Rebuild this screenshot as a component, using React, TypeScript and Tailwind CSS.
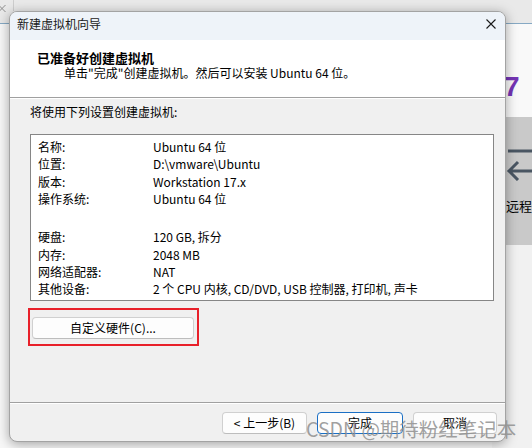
const rows: [string, string][] = [
  ["名称:", "Ubuntu 64 位"],
  ["位置:", "D:\\vmware\\Ubuntu"],
  ["版本:", "Workstation 17.x"],
  ["操作系统:", "Ubuntu 64 位"],
];

const rows2: [string, string][] = [
  ["硬盘:", "120 GB, 拆分"],
  ["内存:", "2048 MB"],
  ["网络适配器:", "NAT"],
  ["其他设备:", "2 个 CPU 内核, CD/DVD, USB 控制器, 打印机, 声卡"],
];

const Row = ({ label, value }: { label: string; value: string }) => (
  <div className="flex h-[17.3px] items-center whitespace-nowrap leading-[17px]">
    <span className="w-[115px] shrink-0">{label}</span>
    <span>{value}</span>
  </div>
);

const WinButton = ({
  children,
  primary,
  className = "",
}: {
  children: React.ReactNode;
  primary?: boolean;
  className?: string;
}) => (
  <button
    type="button"
    className={`flex h-[22px] items-center justify-center rounded-[4px] border bg-[#fdfdfd] text-[12px] leading-none text-black ${
      primary ? "border-[#1a6fc4]" : "border-[#d0d0d0] border-b-[#bdbdbd]"
    } ${className}`}
  >
    {children}
  </button>
);

const App = () => {
  return (
    <div className="relative h-[448px] w-[532px] overflow-hidden bg-[#f2f2f2] font-['Noto_Sans_CJK_SC',sans-serif] text-[12px] text-black">
      {/* app window behind the dialog */}
      <div className="flex h-full flex-col">
        <div className="flex h-[24px] shrink-0 items-start border-b border-[#86a9c4] bg-[#e9e9e9]">
          <svg width="8" height="14" className="shrink-0 overflow-visible">
            <path d="M-1.5 5 L5.5 12 M5.5 5 L-1.5 12" stroke="#8c8c8c" strokeWidth="1" />
          </svg>
          <div className="ml-[5px] h-[11px] w-px bg-[#cdcdcd]" />
        </div>
        <div className="flex flex-1 justify-end bg-[#f7f7f7]">
          <div className="flex w-[40px] flex-col overflow-hidden">
            <div className="h-[93px] shrink-0 bg-[#f9f9f9] pl-[12px] pt-[49px]">
              <span className="font-['Liberation_Sans',sans-serif] text-[28px] font-bold leading-none text-[#7434b4]">
                7
              </span>
            </div>
            <div className="flex h-[128px] shrink-0 flex-col bg-[#c9c9c9]">
              <svg width="40" height="64" className="shrink-0">
                <path d="M16 34 H40" stroke="#4a5663" strokeWidth="3" />
                <path d="M17 54 H40 M26 45 L17 54 L26 63" stroke="#4a5663" strokeWidth="3" fill="none" />
              </svg>
              <span className="mt-[18px] whitespace-nowrap pl-[14px] text-[13px] leading-[13px]">远程</span>
            </div>
            <div className="flex-1 bg-[#f1f1f1]" />
          </div>
        </div>
      </div>

      {/* wizard dialog */}
      <div className="absolute left-[9px] top-[11px] flex h-[431px] w-[497px] flex-col overflow-hidden rounded-[8px] border border-[#a3a3a3] bg-[#f0f0f0] shadow-[0_2px_12px_rgba(0,0,0,0.35)]">
        {/* title bar */}
        <div className="flex h-[28px] shrink-0 items-center justify-between bg-[#eef3f9] pb-[4px] pl-[7px] pr-[9px]">
          <span className="leading-none text-[#1a1a1a]">新建虚拟机向导</span>
          <svg width="10" height="10" viewBox="0 0 10 10">
            <path d="M0.5 0.5 L9.5 9.5 M9.5 0.5 L0.5 9.5" stroke="#1a1a1a" strokeWidth="1.1" />
          </svg>
        </div>

        {/* header */}
        <div className="h-[58px] shrink-0 border-b border-[#a0a0a0] bg-white">
          <div className="pl-[27px] pt-[10px] text-[13px] font-bold leading-[16px]">已准备好创建虚拟机</div>
          <div className="pl-[54px] leading-[14px]">
            单击"完成"创建虚拟机。然后可以安装 Ubuntu 64 位。
          </div>
        </div>

        {/* body */}
        <div className="flex flex-1 flex-col border-t border-white pl-[20px] pr-[11px] pt-[5px]">
          <div className="leading-[16px]">将使用下列设置创建虚拟机:</div>
          <div className="mt-[14px] h-[167px] border border-[#868686] bg-white pl-[7px] pt-[3px]">
            {rows.map(([l, v]) => (
              <Row key={l} label={l} value={v} />
            ))}
            <div className="h-[21px]" />
            {rows2.map(([l, v]) => (
              <Row key={l} label={l} value={v} />
            ))}
          </div>
          <div className="-ml-[2px] mt-[7px] h-[38px] w-[171px] border-2 border-[#e8202a] pl-[2px] pt-[7px]">
            <WinButton className="w-[162px]">自定义硬件(C)...</WinButton>
          </div>
        </div>

        {/* footer */}
        <div className="h-[39px] shrink-0 border-t border-[#a0a0a0]">
          <div className="flex h-full justify-end gap-[10px] border-t border-white pr-[8px] pt-[8px]">
            <WinButton className="w-[85px]">&lt; 上一步(B)</WinButton>
            <WinButton primary className="w-[86px]">
              完成
            </WinButton>
            <WinButton className="w-[84px]">取消</WinButton>
          </div>
        </div>
      </div>

      {/* CSDN watermark */}
      <div className="pointer-events-none absolute left-[306px] top-[418px] whitespace-nowrap text-[19.5px] leading-[22px] text-[#8f8f8f]/85">
        CSDN @期待粉红笔记本
      </div>
    </div>
  );
};

export default App;
